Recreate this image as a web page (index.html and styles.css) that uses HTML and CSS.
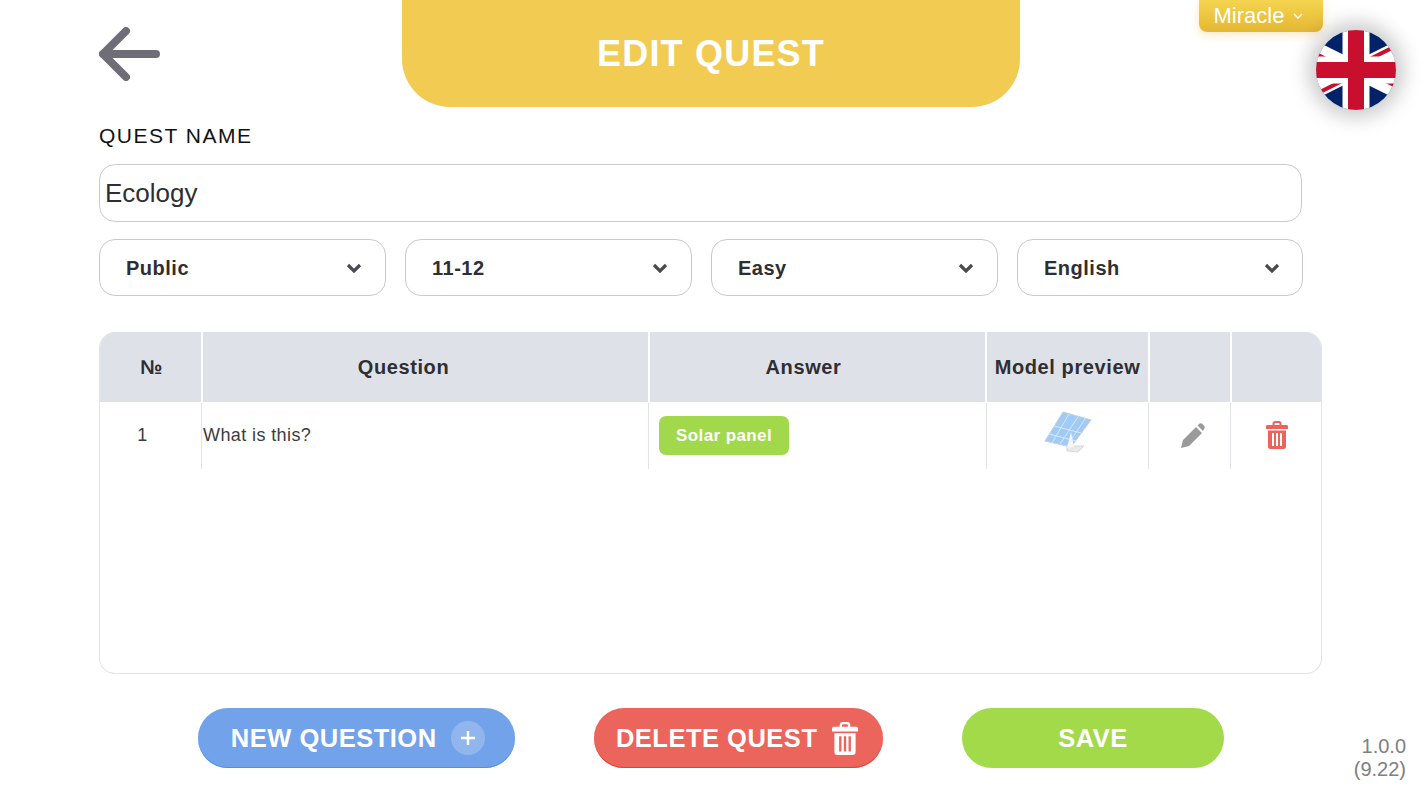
FILE: index.html
```html
<!DOCTYPE html>
<html>
<head>
    <link rel="stylesheet" href="styles.css">
</head>
<body>
<svg class="icon-defs" width="0" height="0">
    <symbol id="trash" viewBox="0 0 22 28">
        <path fill-rule="evenodd" d="M6.500 4V2.600C6.500 1 7.600 0 9 0h4c1.400 0 2.500 1 2.500 2.600V4H20.500C21.400 4 22 4.600 22 5.500V8H0V5.500C0 4.600.6 4 1.500 4zM8.500 4h5V2.800c0-.5-.3-.8-.8-.8H9.300c-.5 0-.8.3-.8.8zM2 9.500h18V25.500C20 27 19 28 17.500 28h-13C3 28 2 27 2 25.500zM6 12v13h2V12zM10 12v13h2V12zM14 12v13h2V12z"/>
    </symbol>
</svg>

<div class="page">
    <div class="top-bar">
        <a class="back-link">
            <svg width="62" height="54" viewBox="0 0 62 54">
                <path d="M27 4 L4 27 L27 50 M4 27 H57" fill="none" stroke="#6f6e77" stroke-width="8" stroke-linecap="round" stroke-linejoin="round"/>
            </svg>
        </a>
        <div class="title-tab">EDIT QUEST</div>
        <div></div>
        <div class="user-menu">
            <span>Miracle</span>
            <svg width="10" height="6" viewBox="0 0 10 6"><path d="M1 1 L5 5 L9 1" fill="none" stroke="#fff" stroke-width="1.300"/></svg>
        </div>
    </div>

    <div class="field-label">QUEST NAME</div>
    <div class="name-input">Ecology</div>

    <div class="select-row">
        <div class="select-box"><span>Public</span><svg class="chevron" width="16" height="11" viewBox="0 0 16 11"><path d="M2 2 L8 8 L14 2" fill="none" stroke="#4a4a50" stroke-width="3.200"/></svg></div>
        <div class="select-box"><span>11-12</span><svg class="chevron" width="16" height="11" viewBox="0 0 16 11"><path d="M2 2 L8 8 L14 2" fill="none" stroke="#4a4a50" stroke-width="3.200"/></svg></div>
        <div class="select-box"><span>Easy</span><svg class="chevron" width="16" height="11" viewBox="0 0 16 11"><path d="M2 2 L8 8 L14 2" fill="none" stroke="#4a4a50" stroke-width="3.200"/></svg></div>
        <div class="select-box"><span>English</span><svg class="chevron" width="16" height="11" viewBox="0 0 16 11"><path d="M2 2 L8 8 L14 2" fill="none" stroke="#4a4a50" stroke-width="3.200"/></svg></div>
    </div>

    <div class="quest-table">
        <div class="table-row table-head">
            <div class="cell cell-num">№</div>
            <div class="cell cell-q-title">Question</div>
            <div class="cell cell-a-title">Answer</div>
            <div class="cell">Model preview</div>
            <div class="cell"></div>
            <div class="cell"></div>
        </div>
        <div class="table-row table-body">
            <div class="cell cell-index">1</div>
            <div class="cell cell-question">What is this?</div>
            <div class="cell cell-answer"><span class="answer-tag">Solar panel</span></div>
            <div class="cell">
                <svg class="model-thumb" width="50" height="42" viewBox="0 0 50 42">
                    <path d="M24 35 L41 35 L35 41 L24 40 Z" fill="#e8eaea" stroke="#cfd2d2" stroke-width=".8"/>
                    <path d="M20 1 L48 9 L28 36 L2 30 Z" fill="#9fcbf6" stroke="#c8ced2"/>
                    <path d="M11 15 L38 22 M6 23 L33 30 M26 3 L9 32 M35 6 L17 33 M42 8 L24 35" fill="none" stroke="#d6e9fb" stroke-width="1"/>
                    <path d="M28 21 L31 36 L24 37 Z" fill="#f4f7f8"/>
                </svg>
            </div>
            <div class="cell cell-edit">
                <svg width="24" height="25" viewBox="0 0 24 25">
                    <path d="M0 25 L2 17 L15 4 L21 10 L8 23 Z M16.500 2.500 L18 1 C19 0 20.500 0 21.500 1 L23 2.500 C24 3.500 24 5 23 6 L22 8 Z" fill="#9a9a9a"/>
                </svg>
            </div>
            <div class="cell cell-delete">
                <svg class="trash-red" width="22" height="28"><use href="#trash"/></svg>
            </div>
        </div>
    </div>

    <div class="button-row">
        <a class="pill-btn btn-new">NEW QUESTION <span class="plus-circle"><svg width="16" height="16" viewBox="0 0 16 16"><path d="M8 1 V15 M1 8 H15" stroke="#fff" stroke-width="2.400"/></svg></span></a>
        <a class="pill-btn btn-delete">DELETE QUEST <svg class="trash-white" width="26" height="33"><use href="#trash"/></svg></a>
        <a class="pill-btn btn-save">SAVE</a>
    </div>
</div>

<div class="flag-btn">
    <svg width="80" height="80" viewBox="0 0 80 80">
        <rect width="80" height="80" fill="#012169"/>
        <path d="M-40 0 L120 80 M-40 80 L120 0" stroke="#fff" stroke-width="16"/>
        <path d="M-40 4 L40 44 M120 -4 L40 36 M-40 84 L40 44 M120 76 L40 36" stroke="#c8102e" stroke-width="4"/>
        <path d="M40 0 V80 M0 40 H80" stroke="#fff" stroke-width="27"/>
        <path d="M40 0 V80 M0 40 H80" stroke="#c8102e" stroke-width="16"/>
    </svg>
</div>

<div class="version">1.0.0<br>(9.22)</div>
</body>
</html>
```

FILE: styles.css
```css
html, body {
    margin: 0;
    height: 800px;
    overflow: hidden;
    background-color: #ffffff;
    font-family: "Liberation Sans", Arial, sans-serif;
    color: #2e2e33;
}

.icon-defs {
    position: absolute;
}

.page {
    padding-left: 99px;
    width: 1224px;
}

.top-bar {
    display: grid;
    grid-template-columns: 303px 618px 179px 124px;
    height: 107px;
}

.back-link {
    padding-top: 27px;
}

.back-link svg {
    display: block;
}

.title-tab {
    display: flex;
    align-items: center;
    justify-content: center;
    padding-top: 1px;
    background-color: #f2cc52;
    border-radius: 0 0 48px 48px;
    color: #ffffff;
    font-size: 36px;
    font-weight: bold;
    letter-spacing: 1.200px;
}

.user-menu {
    display: flex;
    align-items: center;
    justify-content: center;
    gap: 9px;
    height: 32px;
    padding-right: 5px;
    box-sizing: border-box;
    border-radius: 0 0 8px 8px;
    background: linear-gradient(#f5d44f, #e5b733);
    box-shadow: 0 3px 8px rgba(240, 190, 90, 0.35);
    color: #ffffff;
    font-size: 22px;
}

.field-label {
    margin-top: 18px;
    height: 21px;
    font-size: 21px;
    line-height: 21px;
    letter-spacing: 1.500px;
    color: #111111;
}

.name-input {
    margin-top: 18px;
    width: 1203px;
    height: 58px;
    box-sizing: border-box;
    display: flex;
    align-items: center;
    padding-left: 5px;
    border: 1px solid #c9cad0;
    border-radius: 16px;
    font-size: 26px;
}

.select-row {
    display: flex;
    gap: 19px;
    margin-top: 17px;
}

.select-box {
    display: flex;
    align-items: center;
    justify-content: space-between;
    width: 287px;
    height: 57px;
    box-sizing: border-box;
    padding: 1px 23px 0 26px;
    border: 1px solid #c9cad0;
    border-radius: 16px;
    font-size: 20px;
    font-weight: bold;
    letter-spacing: 0.500px;
}

.select-box:last-child {
    width: 286px;
    padding-right: 22px;
}

.quest-table {
    margin-top: 36px;
    width: 1223px;
    height: 342px;
    box-sizing: border-box;
    border: 1px solid #e2e3e9;
    border-top: 0;
    border-radius: 16px;
    overflow: hidden;
}

.table-row {
    display: grid;
}

.table-head {
    grid-template-columns: 103px 447px 337px 163px 82px 1fr;
    height: 70px;
    border-bottom: 1px solid #ffffff;
}

.table-head .cell {
    background-color: #dfe1e9;
    border-right: 2px solid #ffffff;
    font-size: 20px;
    font-weight: bold;
    letter-spacing: 0.600px;
}

.table-head .cell:last-child {
    border-right: 0;
}

.table-head .cell-num {
    padding-left: 2px;
}

.table-head .cell-q-title {
    padding-right: 44px;
}

.table-head .cell-a-title {
    padding-right: 28px;
}

.table-body {
    grid-template-columns: 102px 447px 338px 162px 82px 1fr;
    height: 66px;
}

.cell {
    display: flex;
    align-items: center;
    justify-content: center;
    white-space: nowrap;
}

.table-body .cell {
    padding-bottom: 2px;
    border-right: 1px solid #e2e3e9;
    font-size: 18px;
    letter-spacing: 0.400px;
    color: #3c3c42;
}

.table-body .cell:last-child {
    border-right: 0;
}

.table-body .cell-index {
    padding-right: 16px;
}

.table-body .cell-question {
    justify-content: flex-start;
    padding-left: 1px;
}

.table-body .cell-answer {
    justify-content: flex-start;
    padding-left: 10px;
}

.table-body .cell-edit {
    padding-left: 6px;
}

.table-body .cell-delete {
    padding-left: 2px;
}

.model-thumb {
    margin-bottom: 6px;
}

.answer-tag {
    padding: 0 17px;
    height: 39px;
    line-height: 39px;
    border-radius: 7px;
    background-color: #a2d94c;
    color: #ffffff;
    font-size: 17px;
    font-weight: bold;
}

.trash-red {
    fill: #ec6459;
}

.trash-white {
    fill: #ffffff;
    margin-left: 7px;
}

.button-row {
    display: flex;
    gap: 79px;
    margin-top: 34px;
    padding-left: 99px;
}

.pill-btn {
    display: flex;
    align-items: center;
    justify-content: center;
    height: 60px;
    box-sizing: border-box;
    border-radius: 30px;
    color: #ffffff;
    font-size: 25.500px;
    font-weight: bold;
    letter-spacing: 0.500px;
    white-space: pre;
}

.btn-new {
    width: 317px;
    padding-left: 3px;
    background-color: #72a2ea;
    box-shadow: inset 0 -1px 0 #4f90e8;
}

.btn-delete {
    width: 289px;
    padding-right: 3px;
    background-color: #ec655c;
    box-shadow: inset 0 -1px 0 #ee3a2a;
}

.btn-save {
    width: 262px;
    background-color: #a2da4a;
}

.plus-circle {
    display: flex;
    align-items: center;
    justify-content: center;
    width: 34px;
    height: 34px;
    margin-left: 7px;
    border-radius: 50%;
    background-color: rgba(255, 255, 255, 0.22);
}

.flag-btn {
    position: absolute;
    left: 1316px;
    top: 30px;
    width: 80px;
    height: 80px;
    border-radius: 50%;
    overflow: hidden;
    box-shadow: 0 0 20px 7px rgba(0, 0, 0, 0.22);
}

.version {
    position: absolute;
    right: 16px;
    top: 735px;
    text-align: right;
    font-size: 20px;
    line-height: 23px;
    color: #808080;
}
```
